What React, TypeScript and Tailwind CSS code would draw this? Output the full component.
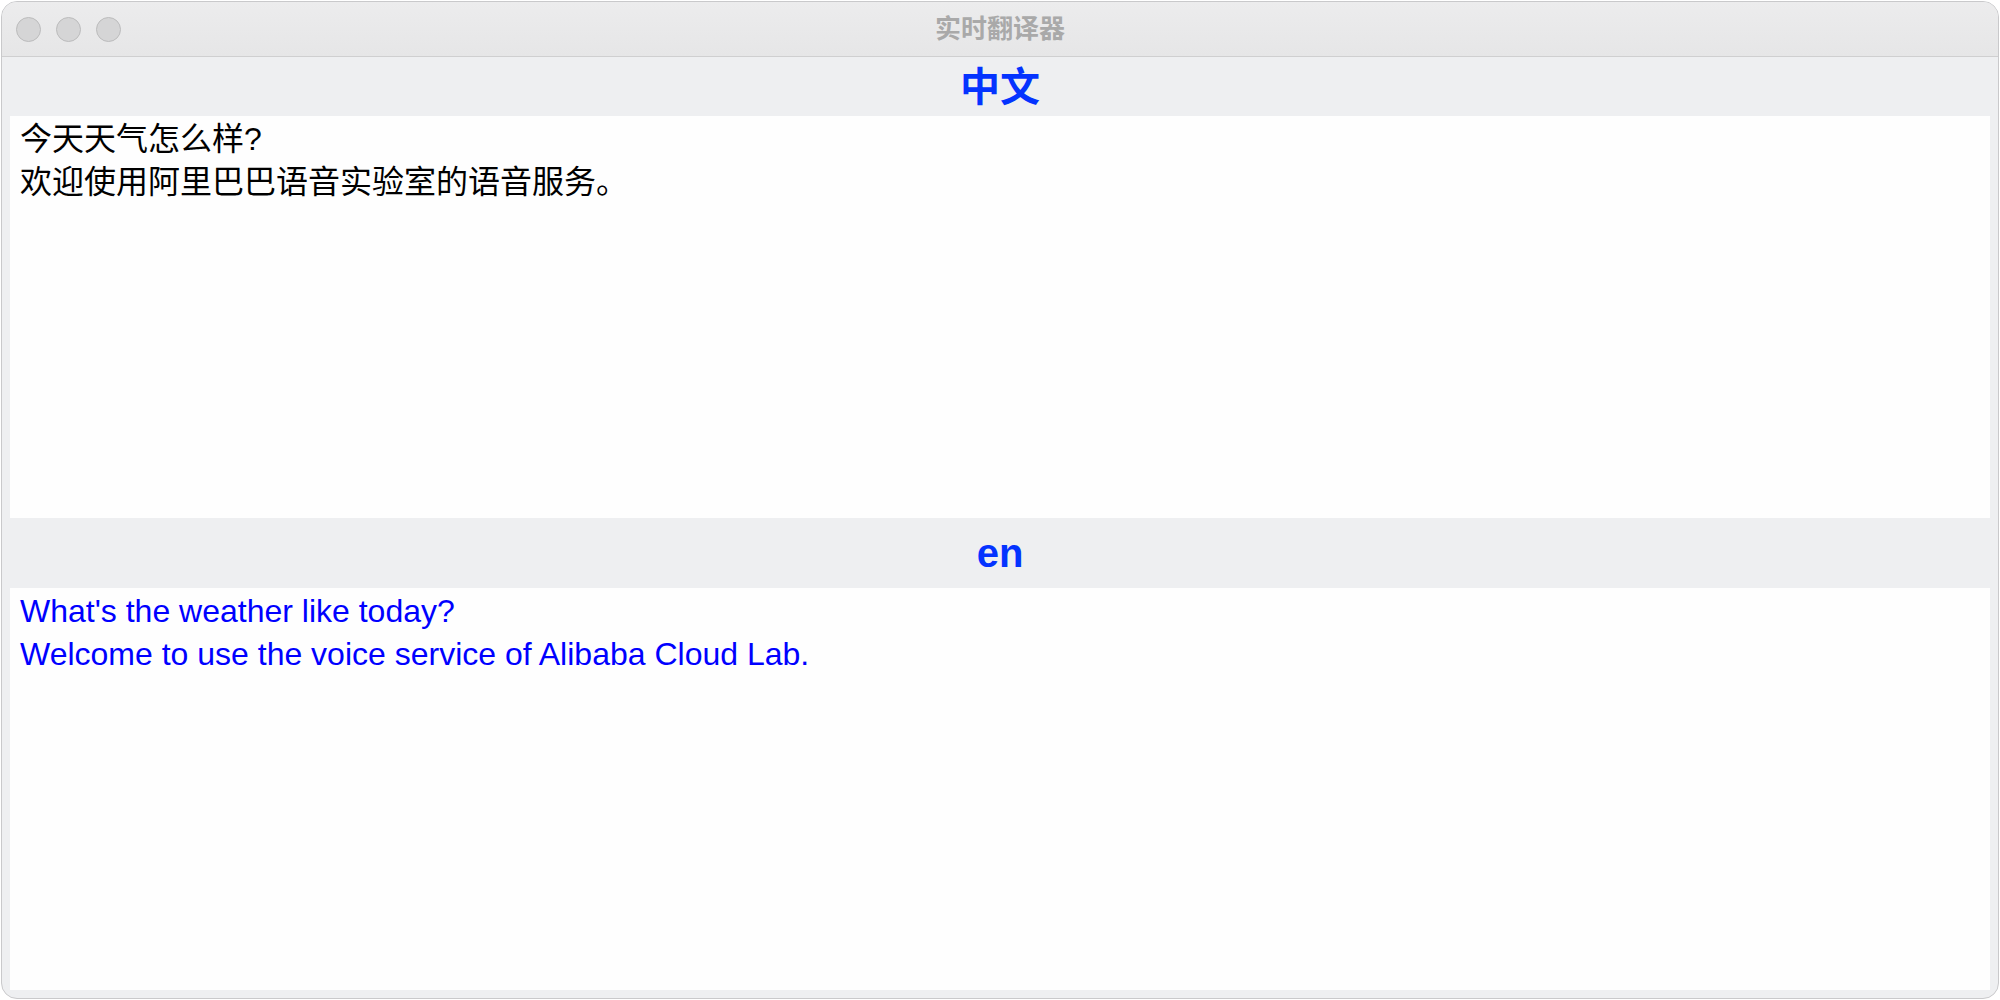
const ZH_LINES = ['今天天气怎么样?', '欢迎使用阿里巴巴语音实验室的语音服务。']
const EN_LINES = ["What's the weather like today?", 'Welcome to use the voice service of Alibaba Cloud Lab.']

const FONT = "font-['Liberation_Sans','Noto_Sans_CJK_SC',sans-serif]"

function TrafficLights() {
  return (
    <div className="flex items-center gap-[15px] pl-[14px]">
      {[0, 1, 2].map((i) => (
        <span key={i} className="w-[25px] h-[25px] rounded-full bg-[#d5d5d6] border border-[#bbbbbc]" />
      ))}
    </div>
  )
}

function Pane({ label, lines, color, headerHeight }: { label: string; lines: string[]; color: string; headerHeight: string }) {
  return (
    <>
      <div className={`${headerHeight} flex items-center justify-center`}>
        <span className="text-[40px] font-bold text-[#0433ff] leading-none">{label}</span>
      </div>
      <div className={`flex-1 bg-[#fefefe] px-[10px] pt-[2px] ${color}`}>
        {lines.map((l) => (
          <div key={l} className="text-[32px] leading-[43px]">
            {l}
          </div>
        ))}
      </div>
    </>
  )
}

export default function App() {
  return (
    <div className={`w-[2000px] h-[1000px] bg-white p-px ${FONT}`}>
      <div className="h-full flex flex-col rounded-[16px] border border-[#c9c9cb] overflow-hidden bg-[#eeeff1]">
        <div className="h-[55px] shrink-0 grid grid-cols-[1fr_auto_1fr] items-center bg-gradient-to-b from-[#ececed] to-[#e6e6e7] border-b border-[#cfcfd0]">
          <TrafficLights />
          <div className="text-[26px] font-bold text-[#a9a9a9] leading-none">实时翻译器</div>
          <div />
        </div>
        <div className="flex-1 flex flex-col px-[8px] pb-[8px]">
          <Pane label="中文" lines={ZH_LINES} color="text-black" headerHeight="h-[59px]" />
          <Pane label="en" lines={EN_LINES} color="text-[#0000ff]" headerHeight="h-[70px]" />
        </div>
      </div>
    </div>
  )
}
